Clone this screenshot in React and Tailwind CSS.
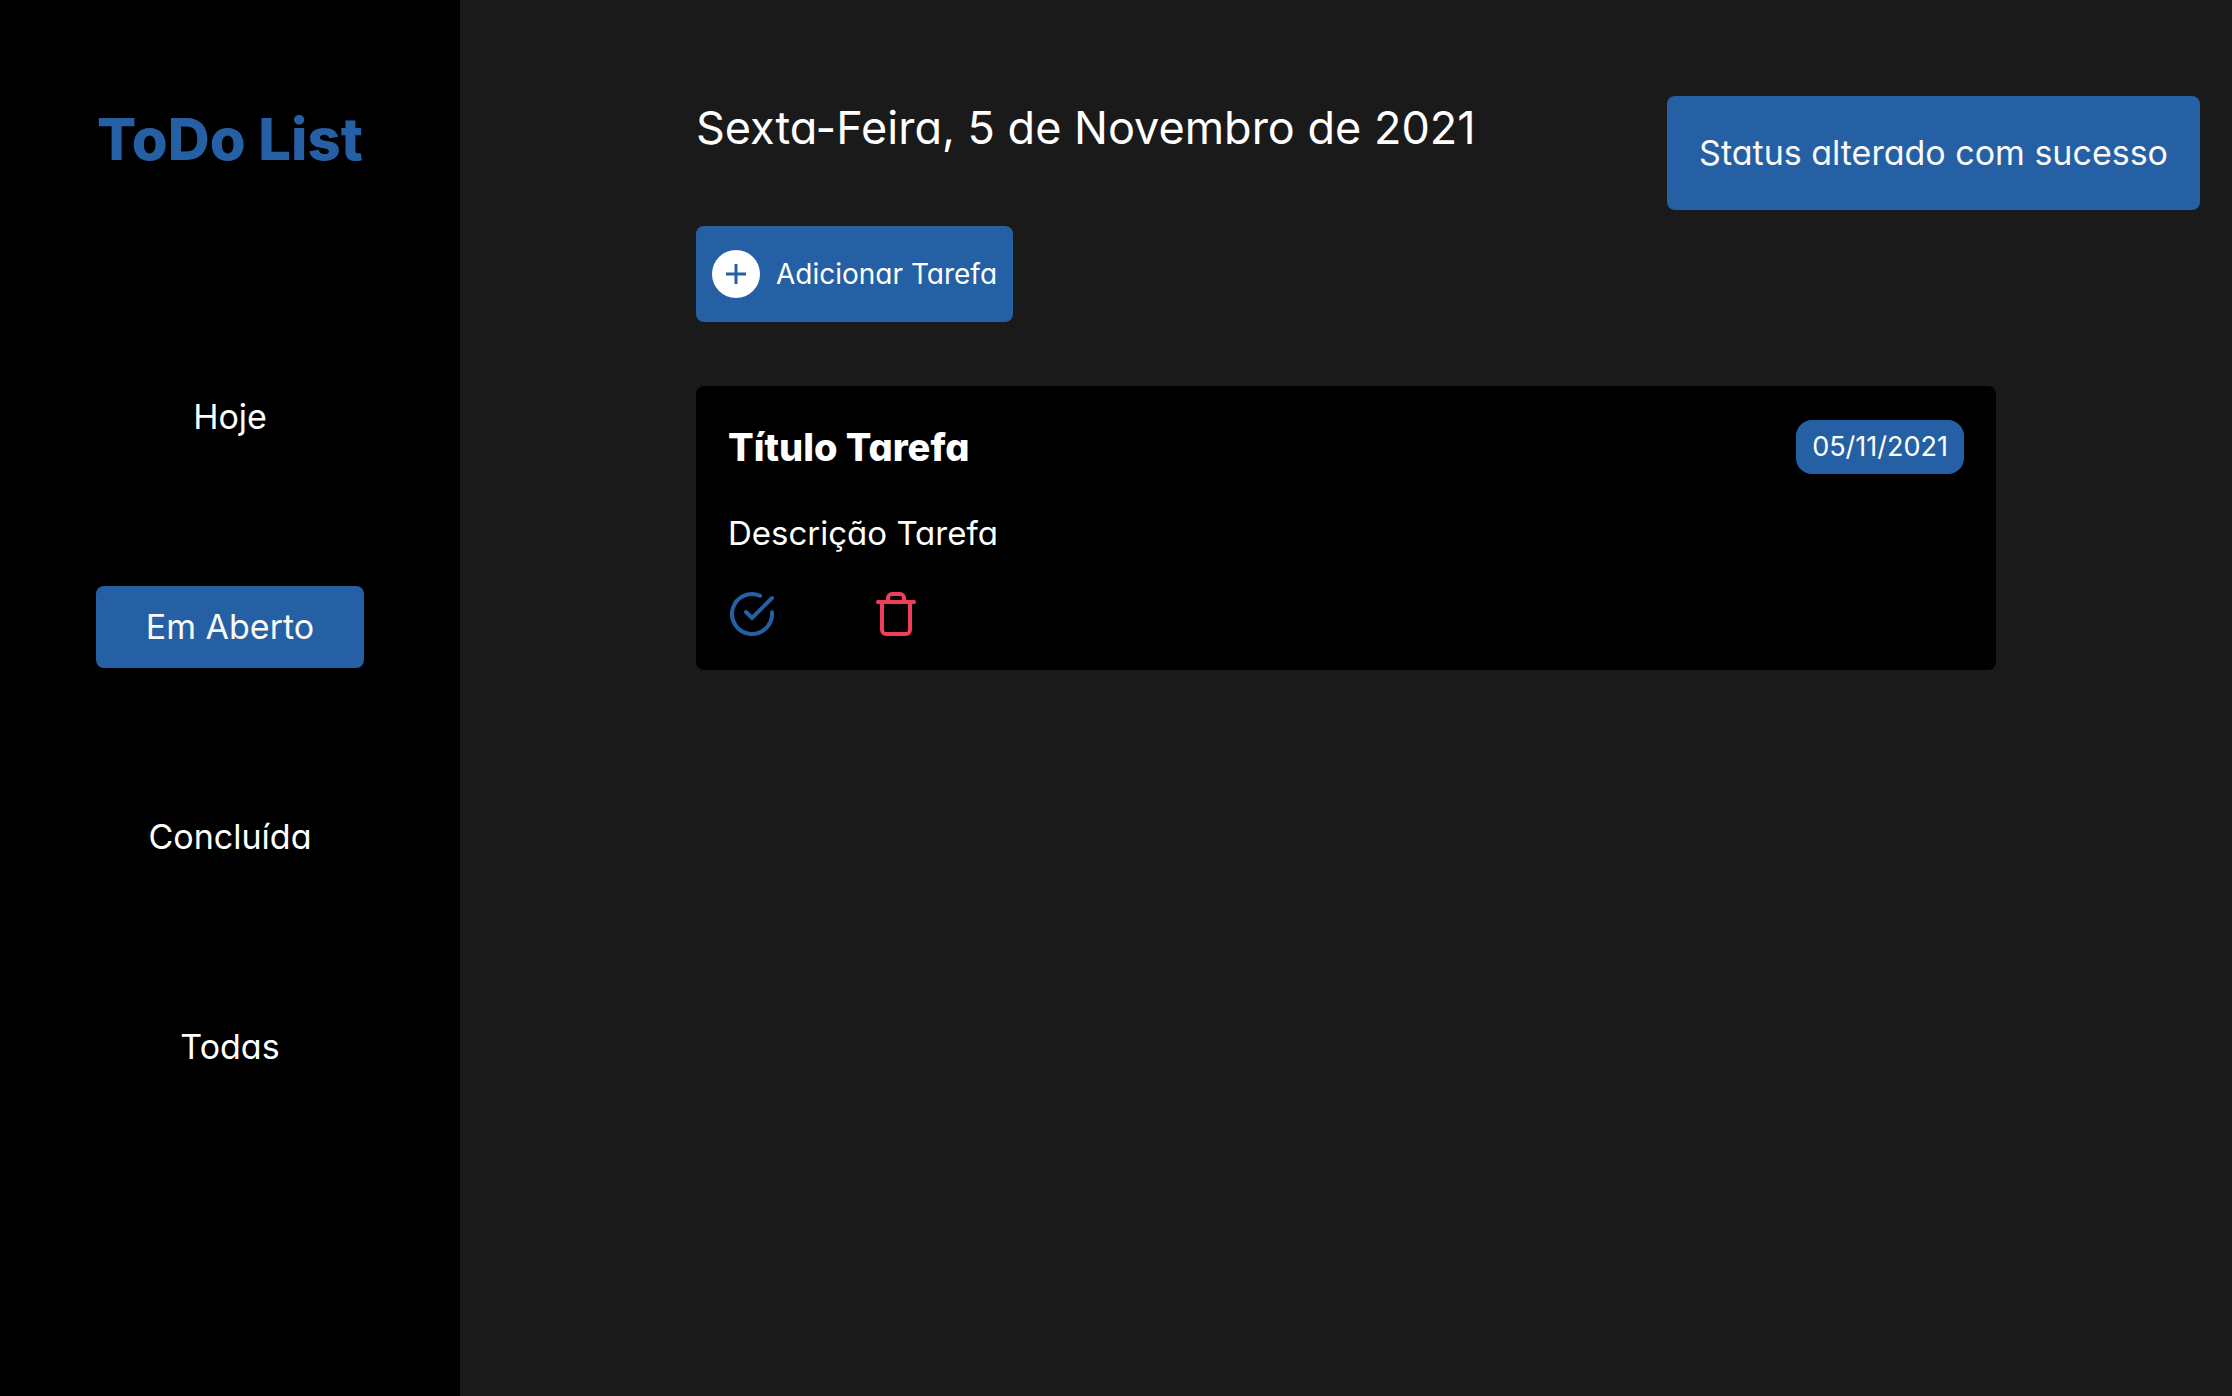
import React, { useState } from "react";
import { FiCheckCircle, FiTrash } from "react-icons/fi";

const filters = ["Hoje", "Em Aberto", "Concluída", "Todas"];

const tasks = [
  { id: 1, title: "Título Tarefa", description: "Descrição Tarefa", date: "05/11/2021" },
];

function Sidebar({ active, onSelect }) {
  return (
    <aside className="flex shrink-0 flex-col bg-black px-24 py-24">
      <h1 className="text-center text-[58px] leading-[86px] font-extrabold whitespace-nowrap text-[#2660a4]">
        ToDo List
      </h1>
      <nav className="mt-[194px] flex w-67 flex-col gap-32 self-center">
        {filters.map((name) => (
          <button
            key={name}
            type="button"
            onClick={() => onSelect(name)}
            className={
              name === active
                ? "rounded-lg bg-[#2660a4] py-4 text-[34px] leading-[50px] text-[#f9f9f9]"
                : "rounded-lg py-4 text-[34px] leading-[50px] text-white"
            }
          >
            {name}
          </button>
        ))}
      </nav>
    </aside>
  );
}

function AddButton() {
  return (
    <button
      type="button"
      className="mt-[66px] flex h-24 items-center gap-4 self-start rounded-lg bg-[#2660a4] px-4 text-[28px] leading-10 text-white"
    >
      <span className="flex size-12 items-center justify-center rounded-full bg-white">
        <svg viewBox="0 0 20 20" className="size-5" aria-hidden="true">
          <path d="M10 0V20M0 10H20" stroke="#2660a4" strokeWidth="3" />
        </svg>
      </span>
      Adicionar Tarefa
    </button>
  );
}

function TaskCard({ task }) {
  return (
    <article className="rounded-lg bg-black p-8 text-white">
      <header className="flex h-[58px] items-center justify-between">
        <h2 className="text-[38px] leading-[50px] font-extrabold">{task.title}</h2>
        <time className="rounded-2xl bg-[#2660a4] px-4 text-[27px] leading-[54px]">{task.date}</time>
      </header>
      <p className="mt-8 text-[33px] leading-[50px]">{task.description}</p>
      <div className="mt-8 flex gap-24">
        <button type="button" aria-label="Concluir tarefa" className="text-[#2660a4]">
          <FiCheckCircle className="size-12" />
        </button>
        <button type="button" aria-label="Excluir tarefa" className="text-[#ef3e5c]">
          <FiTrash className="size-12" />
        </button>
      </div>
    </article>
  );
}

export default function App() {
  const [active, setActive] = useState("Em Aberto");
  return (
    <div className="flex min-h-screen bg-[#1a1a1a] font-['Inter',sans-serif] [font-feature-settings:'cv11']">
      <Sidebar active={active} onSelect={setActive} />
      <main className="flex min-w-0 flex-1 justify-center px-8 py-24">
        <div className="flex w-full max-w-[1300px] flex-col">
          <h2 className="text-[45px] leading-16 text-white">Sexta-Feira, 5 de Novembro de 2021</h2>
          <AddButton />
          <section className="mt-16 flex flex-col gap-8">
            {tasks.map((task) => (
              <TaskCard key={task.id} task={task} />
            ))}
          </section>
        </div>
      </main>
      <div
        role="status"
        className="fixed top-24 right-8 rounded-lg bg-[#2660a4] p-8 text-[34px] leading-[50px] text-[#f9f9f9]"
      >
        Status alterado com sucesso
      </div>
    </div>
  );
}
